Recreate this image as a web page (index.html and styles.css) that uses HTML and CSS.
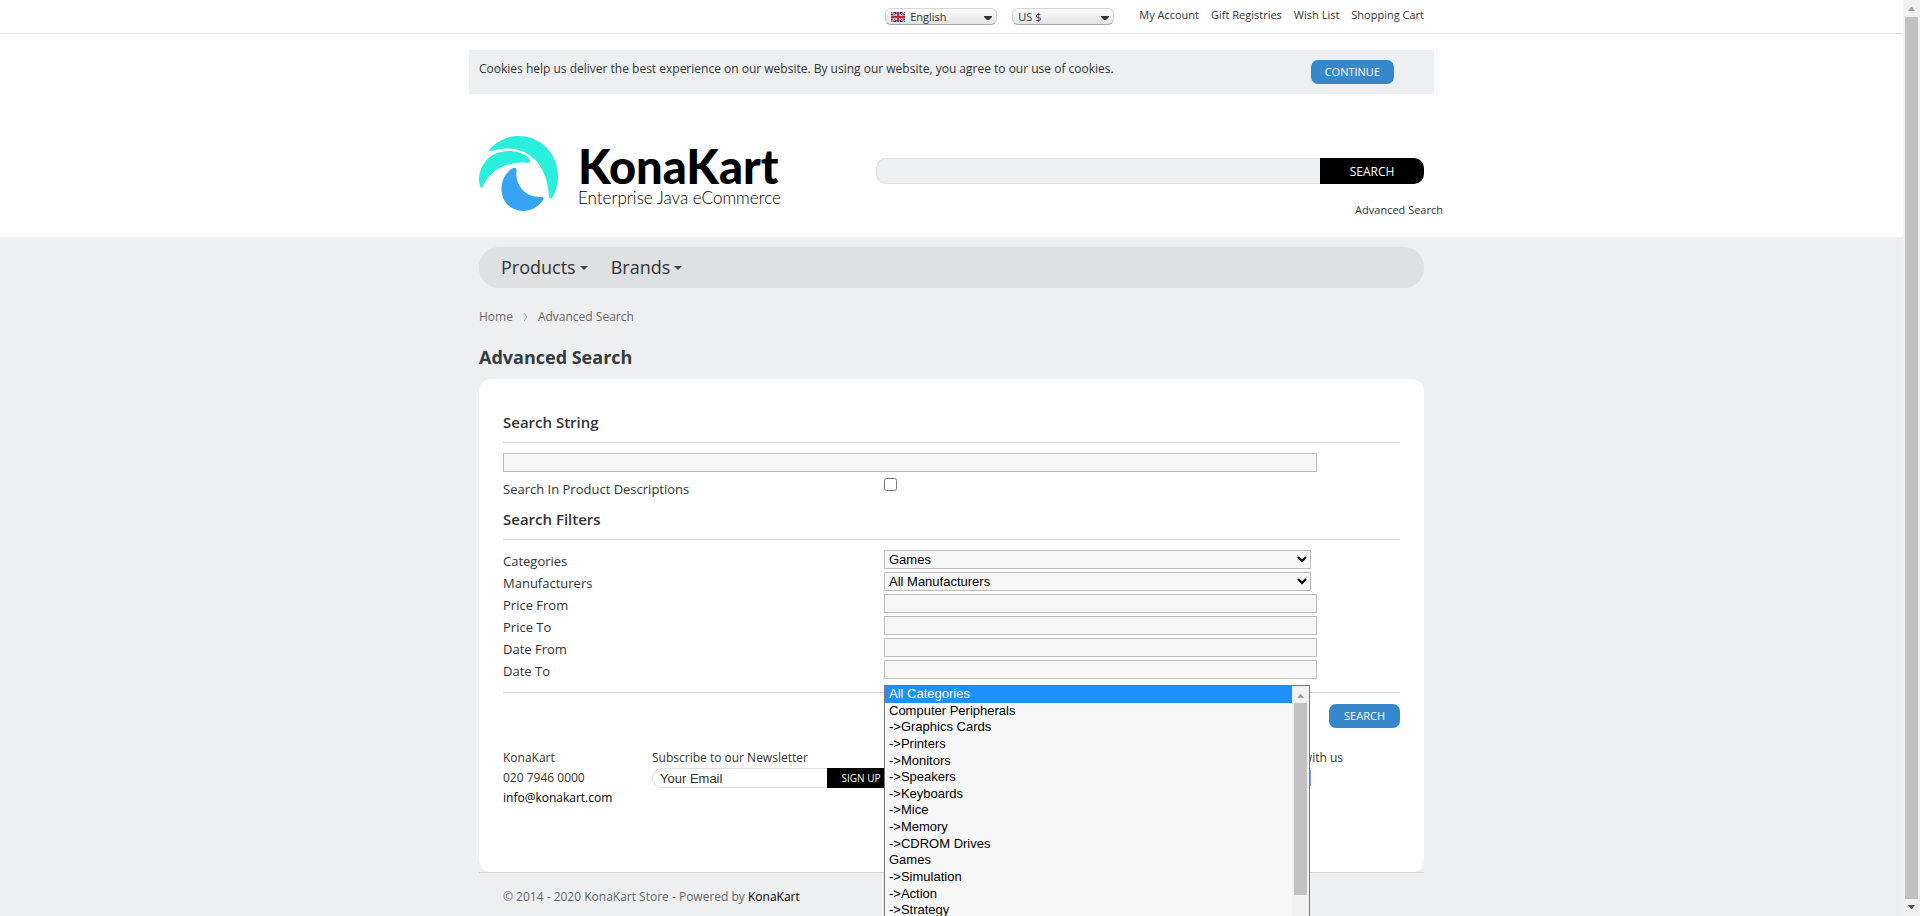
FILE: index.html
```html
<!DOCTYPE html>
<html lang="en">
<head>
<meta charset="utf-8">
<title>KonaKart - Advanced Search</title>
<link rel="stylesheet" href="styles.css">
</head>
<body>
<header class="header">
  <div class="topbar">
    <div class="container topbar-inner">
      <div class="pill pill-language">
        <svg class="flag" viewBox="0 0 14 10" aria-hidden="true"><path fill="#1c2a78" d="M0 0h14v10H0z"/><path stroke="#fff" stroke-width="2" d="M0 0l14 10M14 0L0 10"/><path stroke="#d0203a" stroke-width="1" d="M0 0l14 10M14 0L0 10"/><path stroke="#fff" stroke-width="3" d="M7 0v10M0 5h14"/><path stroke="#d0203a" stroke-width="2" d="M7 0v10M0 5h14"/></svg>
        <select aria-label="Language"><option>English</option></select>
        <svg class="pill-arrow" viewBox="0 0 8 5" aria-hidden="true"><path d="M0 0h8v1L5 4H3L0 1z"/></svg>
      </div>
      <div class="pill pill-currency">
        <select aria-label="Currency"><option>US $</option></select>
        <svg class="pill-arrow" viewBox="0 0 8 5" aria-hidden="true"><path d="M0 0h8v1L5 4H3L0 1z"/></svg>
      </div>
      <nav class="account-links">
        <a href="#">My Account</a>
        <a href="#">Gift Registries</a>
        <a href="#">Wish List</a>
        <a href="#">Shopping Cart</a>
      </nav>
    </div>
  </div>
  <div class="cookie-bar">
    <p>Cookies help us deliver the best experience on our website. By using our website, you agree to our use of cookies.</p>
    <button class="button" type="button">CONTINUE</button>
  </div>
  <div class="container masthead">
    <a class="logo" href="#" aria-label="KonaKart home">
      <svg class="logo-mark" viewBox="0 0 79 75" aria-hidden="true">
        <path fill="#2aefdd" d="M10.500 13.500C19 4 29 0 39.500 0C62 0 79 18 79 40C79 48 77 55.500 73.500 61.500C72 63.500 69.500 62.500 70 60C69 44 63.500 29 53 21C42 12 28 10.500 12.500 15C10.500 15.500 9.500 14.500 10.500 13.500Z"/>
        <path fill="#2aefdd" d="M2.500 52C1 51 0 47 0 43C1 27 12 15.500 29 15C38 15 46 17.500 50 22.500C52.500 25.500 50.500 27.500 47 26.500C27 26 12 33 4 50Q3 53 2.500 52Z"/>
        <path fill="#36a4f3" d="M33 32.500C36 31 38 32 37.500 35C36 49 46 61 61 61C65 60.500 65.500 62 64 64C59.500 71 52 75 44 75C32 75 22.500 66 22.500 53C22.500 44 27 36.500 33 32.500Z"/>
      </svg>
      <span class="logo-words">
        <span class="logo-name">KonaKart</span>
        <span class="logo-tagline">Enterprise Java eCommerce</span>
      </span>
    </a>
    <div class="site-search">
      <form class="site-search-form">
        <input type="text" aria-label="Search products">
        <button type="button">SEARCH</button>
      </form>
      <a class="advanced-link" href="#">Advanced Search</a>
    </div>
  </div>
</header>
<main class="container">
  <nav class="menu">
    <a href="#">Products <svg viewBox="0 0 8 4" aria-hidden="true"><path d="M0 0h8L4 4z"/></svg></a>
    <a href="#">Brands <svg viewBox="0 0 8 4" aria-hidden="true"><path d="M0 0h8L4 4z"/></svg></a>
  </nav>
  <nav class="breadcrumb" aria-label="Breadcrumb">
    <a href="#">Home</a>
    <svg viewBox="0 0 5 8" aria-hidden="true"><path d="M1 0l3 4-3 4"/></svg>
    <a href="#">Advanced Search</a>
  </nav>
  <h1>Advanced Search</h1>
  <section class="card">
    <form>
      <h2>Search String</h2>
      <div class="fields fields-string">
        <input class="field field-wide" type="text" aria-label="Search String">
        <label for="descriptions">Search In Product Descriptions</label>
        <input id="descriptions" class="check" type="checkbox">
      </div>
      <h2>Search Filters</h2>
      <div class="fields fields-filters">
        <label for="categories">Categories</label>
        <select id="categories" class="field"><option>Games</option></select>
        <label for="manufacturers">Manufacturers</label>
        <select id="manufacturers" class="field"><option>All Manufacturers</option></select>
        <label for="price-from">Price From</label>
        <input id="price-from" class="field" type="text">
        <label for="price-to">Price To</label>
        <input id="price-to" class="field" type="text">
        <label for="date-from">Date From</label>
        <input id="date-from" class="field" type="text">
        <label for="date-to">Date To</label>
        <input id="date-to" class="field" type="text">
        <div class="dropdown">
          <ul role="listbox" aria-label="Categories">
            <li role="option" class="selected" aria-selected="true">All Categories</li>
            <li role="option">Computer Peripherals</li>
            <li role="option">-&gt;Graphics Cards</li>
            <li role="option">-&gt;Printers</li>
            <li role="option">-&gt;Monitors</li>
            <li role="option">-&gt;Speakers</li>
            <li role="option">-&gt;Keyboards</li>
            <li role="option">-&gt;Mice</li>
            <li role="option">-&gt;Memory</li>
            <li role="option">-&gt;CDROM Drives</li>
            <li role="option">Games</li>
            <li role="option">-&gt;Simulation</li>
            <li role="option">-&gt;Action</li>
            <li role="option">-&gt;Strategy</li>
          </ul>
          <div class="dropdown-scroll" aria-hidden="true">
            <svg viewBox="0 0 7 4"><path fill="#a3a3a3" d="M3 0h1l3 4H0z"/></svg>
            <div class="dropdown-thumb"></div>
          </div>
        </div>
      </div>
      <div class="actions"><button class="button" type="button">SEARCH</button></div>
    </form>
    <div class="contact">
      <address>
        <span>KonaKart</span>
        <span>020 7946 0000</span>
        <a href="#">info@konakart.com</a>
      </address>
      <form class="newsletter">
        <label for="email">Subscribe to our Newsletter</label>
        <div class="newsletter-row">
          <input id="email" type="text" value="Your Email">
          <button type="button">SIGN UP</button>
        </div>
      </form>
      <div class="social">
        <span>with us</span>
        <a class="social-icon" href="#" aria-label="Social page"></a>
      </div>
    </div>
  </section>
  <footer class="footer">© 2014 - 2020 KonaKart Store - Powered by <a href="#">KonaKart</a></footer>
</main>
<div class="scrollbar" aria-hidden="true">
  <svg viewBox="0 0 7 4"><path fill="#a3a3a3" d="M3 0h1l3 4H0z"/></svg>
  <div class="scrollbar-thumb"></div>
  <svg viewBox="0 0 7 4"><path fill="#505050" d="M0 0h7L4 4H3z"/></svg>
</div>
</body>
</html>
```
FILE: styles.css
```css
* { box-sizing: border-box; }
html { height: 100%; overflow: hidden; }
body {
  margin: 0;
  padding-right: 17px;
  min-height: 100%;
  background: #eeeff1;
  color: #333;
  font: 13px/20px "Open Sans", sans-serif;
}
a { color: inherit; text-decoration: none; }
p, h1, h2, ul { margin: 0; padding: 0; }
button { font-family: inherit; border: 0; padding: 0; color: #fff; }
.container { width: 100%; max-width: 945px; margin: 0 auto; }

.header { background: #fff; height: 237px; }
.topbar { border-bottom: 1px solid #e0e0e0; height: 34px; font-size: 11px; }
.topbar-inner { display: flex; justify-content: flex-end; padding-top: 8px; }
.pill {
  position: relative;
  display: flex;
  align-items: center;
  height: 17px;
  margin-right: 15px;
  border: 1px solid #d6d6d6;
  border-bottom-color: #a8a8a8;
  border-radius: 6px;
  background: linear-gradient(#fff, #e3e3e3);
}
.pill-language { width: 112px; }
.pill-currency { width: 102px; margin-right: 25px; }
.pill select {
  appearance: none;
  width: 100%;
  height: 15px;
  border: 0;
  padding: 0 0 0 5px;
  background: none;
  color: #333;
  font: 11px/15px "Open Sans", sans-serif;
}
.flag { flex: none; width: 14px; height: 10px; margin-left: 5px; }
.pill-arrow { position: absolute; right: 4px; top: 7px; width: 8px; height: 5px; fill: #333; pointer-events: none; }
.account-links { display: flex; gap: 12px; line-height: 14px; }

.cookie-bar {
  display: flex;
  justify-content: space-between;
  max-width: 965px;
  height: 44px;
  margin: 16px auto 0;
  padding: 10px 40px 10px 10px;
  background: #eeeff1;
  font-size: 12px;
}
.cookie-bar p { line-height: 18px; }
.button { background: #3788ca; border-radius: 7px; font-size: 11px; line-height: 24px; padding: 0 14px; height: 24px; }

.masthead { display: flex; justify-content: space-between; padding-top: 42px; }
.logo { display: flex; gap: 20px; color: #000; }
.logo-mark { width: 79px; height: 75px; }
.logo-words { display: flex; flex-direction: column; font-family: Lato, sans-serif; }
.logo-name { font-weight: 900; font-size: 47px; line-height: 44px; padding-top: 8px; }
.logo-tagline { font-size: 17px; line-height: 20px; font-weight: 300; }
.site-search { width: 548px; padding-top: 22px; display: flex; flex-direction: column; }
.site-search-form { display: flex; }
.site-search input {
  flex: 1;
  min-width: 0;
  height: 26px;
  border: 1px solid #e0e0e0;
  border-right: 0;
  border-radius: 10px 0 0 10px;
  background: #eff0f2;
}
.site-search button { width: 104px; height: 26px; background: #000; border-radius: 0 10px 10px 0; font-size: 12px; }
.advanced-link { align-self: flex-end; margin: 16px -19px 0 0; font-size: 11px; }

.menu {
  display: flex;
  gap: 23px;
  height: 41px;
  margin-top: 10px;
  padding-left: 22px;
  border-radius: 20px;
  background: #dfe0e2;
  font-size: 18px;
  line-height: 41px;
}
.menu a { display: flex; align-items: center; gap: 4px; }
.menu svg { width: 8px; height: 4px; fill: #444; }
.breadcrumb { display: flex; align-items: center; gap: 10px; margin-top: 19px; font-size: 12px; color: #666; }
.breadcrumb svg { width: 5px; height: 8px; fill: none; stroke: #aaa; }
h1 { margin-top: 18px; font-size: 18px; line-height: 24px; font-weight: 700; color: #333d42; }
.card { margin-top: 10px; height: 493px; padding: 24px; border-radius: 12px; background: #fff; }
h2 { height: 40px; font-size: 15px; line-height: 38px; font-weight: 600; border-bottom: 1px solid #d5d5d5; }
.fields {
  position: relative;
  display: grid;
  grid-template-columns: 381fr 433fr 83fr;
  grid-auto-rows: 19px;
  row-gap: 3px;
  padding-top: 10px;
}
.fields label { grid-column: 1; line-height: 22px; }
.field { grid-column: 2; width: 100%; height: 19px; border: 1px solid #bbb; background: #f7f7f7; color: #000; font: 13px/15px "Liberation Sans", sans-serif; }
.field-wide { grid-column: 1 / 3; }
select.field { width: calc(100% - 6px); border-radius: 0; }
.check { grid-column: 2; margin: 3px 0 0; width: 13px; height: 13px; }
.fields-string { grid-auto-rows: auto; }
.fields-string label { padding-top: 3px; }
.fields-filters { padding-bottom: 13px; border-bottom: 1px solid #d5d5d5; }

.dropdown {
  position: absolute;
  left: 381px;
  top: 145px;
  width: 426px;
  height: 260px;
  display: flex;
  border: 1px solid #767676;
  background: #f7f7f7;
  color: #000;
  font: 13px/16px "Liberation Sans", sans-serif;
}
.dropdown ul { flex: 1; height: 233px; display: grid; grid-auto-rows: minmax(0, 1fr); list-style: none; }
.dropdown li { padding-left: 4px; }
.dropdown .selected { background: #1e90ff; color: #fff; }
.dropdown-scroll { width: 17px; background: #f1f1f1; padding: 0 2px; }
.dropdown-scroll svg { display: block; width: 7px; height: 4px; margin: 8px auto 5px; }
.dropdown-thumb { height: 192px; background: #c1c1c1; }

.actions { display: flex; justify-content: flex-end; padding-top: 11px; }
.actions .button { padding: 0 15px; }
.contact { display: flex; padding-top: 20px; font-size: 12px; }
address { width: 149px; display: flex; flex-direction: column; font-style: normal; }
address a, .footer a { color: #000; }
.newsletter { width: 290px; display: flex; flex-direction: column; }
.newsletter-row { display: flex; }
.newsletter input {
  width: 175px;
  height: 20px;
  padding: 0 7px;
  border: 1px solid #e0e0e0;
  border-right: 0;
  border-radius: 10px 0 0 10px;
  color: #333;
  font: 13px/16px "Liberation Sans", sans-serif;
}
.newsletter button { width: 68px; height: 20px; background: #000; border-radius: 0 10px 10px 0; font-size: 10px; }
.social { flex: 1; display: flex; flex-direction: column; align-items: flex-end; padding-right: 57px; }
.social-icon { width: 16px; height: 16px; margin: 2px 32px 0 0; background: #73a9e8; }
.footer { padding: 14px 24px; border-top: 1px solid #d5d5d5; color: #666; font-size: 12px; }

.scrollbar {
  position: fixed;
  top: 0;
  right: 0;
  bottom: 0;
  width: 17px;
  display: flex;
  flex-direction: column;
  align-items: center;
  gap: 6px;
  padding: 7px 0;
  background: #f1f1f1;
}
.scrollbar svg { width: 7px; height: 4px; }
.scrollbar-thumb { flex: 1; width: 13px; background: #c1c1c1; }
```
